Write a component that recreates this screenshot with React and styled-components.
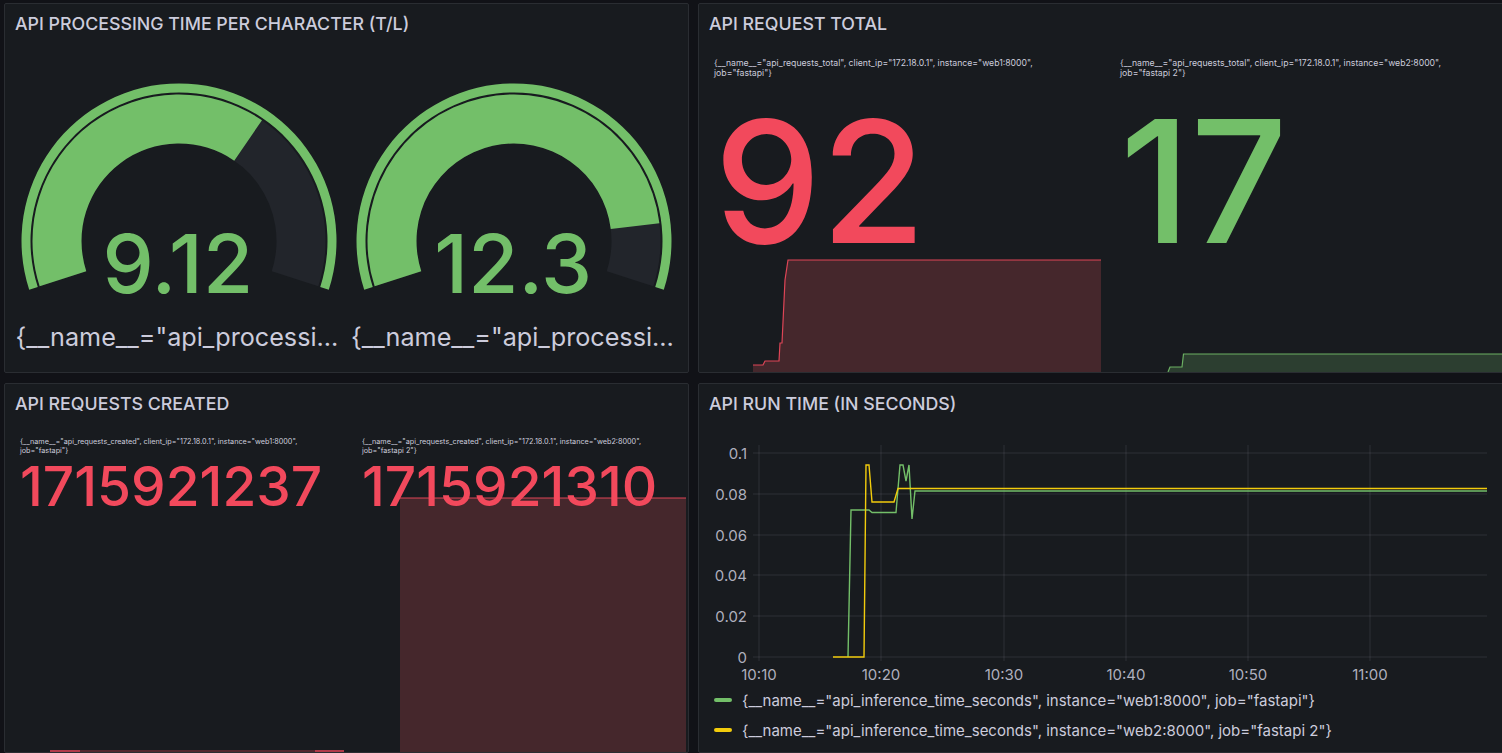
import styled, { createGlobalStyle } from 'styled-components';

const GREEN = '#73bf69';
const RED = '#f2495c';
const YELLOW = '#f2cc0c';

const GlobalStyle = createGlobalStyle`
  html, body {
    margin: 0;
    width: 1502px;
    height: 753px;
    overflow: hidden;
    background: #111217;
    font-family: Inter, "Liberation Sans", sans-serif;
  }
`;

const gauges = [
  { id: 'g1', value: '9.12', endAngle: 55.5 },
  { id: 'g2', value: '12.3', endAngle: 7 },
];

const statsTotal = [
  {
    id: 's1',
    label: '{__name__="api_requests_total", client_ip="172.18.0.1", instance="web1:8000", job="fastapi"}',
    value: '92',
    color: RED,
    fill: '#45272c',
    points: [[43, 365], [53, 365], [55, 361], [69, 361], [70, 343], [72, 343], [75, 280], [78, 260], [391, 260]],
  },
  {
    id: 's2',
    label: '{__name__="api_requests_total", client_ip="172.18.0.1", instance="web2:8000", job="fastapi 2"}',
    value: '17',
    color: GREEN,
    fill: '#2c3e30',
    points: [[52, 372], [54, 367], [66, 367], [67.5, 354], [391, 354]],
  },
];

const statsCreated = [
  {
    id: 'c1',
    label: '{__name__="api_requests_created", client_ip="172.18.0.1", instance="web1:8000", job="fastapi"}',
    value: '1715921237',
    points: [[34, 751], [328, 751]],
    flat: true,
  },
  {
    id: 'c2',
    label: '{__name__="api_requests_created", client_ip="172.18.0.1", instance="web2:8000", job="fastapi 2"}',
    value: '1715921310',
    points: [[42, 498], [328, 498]],
  },
];

const yTicks = [
  { label: '0.1', y: 453 },
  { label: '0.08', y: 494 },
  { label: '0.06', y: 535 },
  { label: '0.04', y: 575 },
  { label: '0.02', y: 616 },
  { label: '0', y: 657 },
];

const xTicks = [
  { label: '10:10', x: 759 },
  { label: '10:20', x: 881 },
  { label: '10:30', x: 1004 },
  { label: '10:40', x: 1126 },
  { label: '10:50', x: 1248 },
  { label: '11:00', x: 1370 },
];

const greenLine = '848,657 851,510 869,510 872,512.5 896,512.5 900,465 903,465 906,481 909,465 912,519 915,491 1487,491';
const yellowLine = '833,657 864,657 866,465 869,465 872,502 894,502 898,488.5 1487,488.5';

const legend = [
  { id: 'l1', color: GREEN, text: '{__name__="api_inference_time_seconds", instance="web1:8000", job="fastapi"}' },
  { id: 'l2', color: YELLOW, text: '{__name__="api_inference_time_seconds", instance="web2:8000", job="fastapi 2"}' },
];

// gauge arcs, angles in degrees counter-clockwise from +x
const polar = (r, deg) => {
  const a = (deg * Math.PI) / 180;
  return [168 + r * Math.cos(a), 161 - r * Math.sin(a)];
};

const arc = (r1, r2, from, to) => {
  const large = from - to > 180 ? 1 : 0;
  const [ax, ay] = polar(r1, from);
  const [bx, by] = polar(r1, to);
  const [cx, cy] = polar(r2, to);
  const [dx, dy] = polar(r2, from);
  return `M${ax} ${ay}A${r1} ${r1} 0 ${large} 1 ${bx} ${by}L${cx} ${cy}A${r2} ${r2} 0 ${large} 0 ${dx} ${dy}Z`;
};

const Gauge = ({ value, endAngle }) => (
  <GaugeCell>
    <GaugeDial>
      <svg width="336" height="215" viewBox="0 0 336 215">
        <path d={arc(157.5, 148.5, 198, -18)} fill={GREEN} />
        <path d={arc(146.5, 97.5, 198, -18)} fill="#22252b" />
        <path d={arc(146.5, 97.5, 198, endAngle)} fill={GREEN} />
      </svg>
      <GaugeValue>{value}</GaugeValue>
    </GaugeDial>
    <GaugeLabel>{'{__name__="api_processing_time_per_character", instance="web1:8000", job="fastapi"}'}</GaugeLabel>
  </GaugeCell>
);

const Spark = ({ points, color, fill, flat, top, width }) => {
  const line = points.map((p) => p.join(',')).join(' ');
  const first = points[0];
  const last = points[points.length - 1];
  return (
    <SparkLayer>
      <svg width={width} height="328" viewBox={`0 ${top} ${width} 328`}>
        {!flat && <polygon points={`${first[0]},800 ${line} ${last[0]},800`} fill={fill} />}
        {flat ? (
          <>
            <polyline points={line} fill="none" stroke={color} strokeOpacity="0.55" strokeWidth="1.2" />
            <line x1="34" x2="64" y1="751" y2="751" stroke={color} strokeWidth="1.2" />
            <line x1="299" x2="328" y1="751" y2="751" stroke={color} strokeWidth="1.2" />
          </>
        ) : (
          <polyline points={line} fill="none" stroke={color} strokeOpacity="0.9" strokeWidth="1.2" />
        )}
      </svg>
    </SparkLayer>
  );
};

const App = () => {
  return (
    <>
      <GlobalStyle />
      <Dashboard>
        <Panel>
          <PanelTitle>API PROCESSING TIME PER CHARACTER (T/L)</PanelTitle>
          <GaugeRow>
            {gauges.map((g) => (
              <Gauge key={g.id} value={g.value} endAngle={g.endAngle} />
            ))}
          </GaugeRow>
        </Panel>

        <Panel>
          <PanelTitle>API REQUEST TOTAL</PanelTitle>
          <StatRow $large>
            {statsTotal.map((s) => (
              <StatCell key={s.id} $large>
                <Spark points={s.points} color={s.color} fill={s.fill} width={391} top={44} />
                <StatLabel $large>{s.label}</StatLabel>
                <StatValue $large $color={s.color}>{s.value}</StatValue>
              </StatCell>
            ))}
          </StatRow>
        </Panel>

        <Panel>
          <PanelTitle>API REQUESTS CREATED</PanelTitle>
          <StatRow>
            {statsCreated.map((s) => (
              <StatCell key={s.id}>
                <Spark points={s.points} color={RED} fill="#45272c" flat={s.flat} width={328} top={424} />
                <StatLabel>{s.label}</StatLabel>
                <StatValue $color={RED}>{s.value}</StatValue>
              </StatCell>
            ))}
          </StatRow>
        </Panel>

        <Panel>
          <PanelTitle>API RUN TIME (IN SECONDS)</PanelTitle>
          <ChartWrap>
            <svg width="803" height="261" viewBox="699 424 803 261">
              {yTicks.map((t) => (
                <g key={t.label}>
                  <line x1="753" x2="1487" y1={t.y} y2={t.y} stroke="#ccccdc" strokeOpacity="0.12" />
                  <AxisText x="747" y={t.y + 6} textAnchor="end">{t.label}</AxisText>
                </g>
              ))}
              {xTicks.map((t) => (
                <g key={t.label}>
                  <line x1={t.x} x2={t.x} y1="445" y2="661" stroke="#ccccdc" strokeOpacity="0.12" />
                  <AxisText x={t.x} y="680" textAnchor="middle">{t.label}</AxisText>
                </g>
              ))}
              <polyline points={greenLine} fill="none" stroke={GREEN} strokeWidth="1.4" />
              <polyline points={yellowLine} fill="none" stroke={YELLOW} strokeWidth="1.4" />
            </svg>
          </ChartWrap>
          <Legend>
            {legend.map((l) => (
              <LegendRow key={l.id}>
                <LegendSwatch $color={l.color} />
                <span>{l.text}</span>
              </LegendRow>
            ))}
          </Legend>
        </Panel>
      </Dashboard>
    </>
  );
};

const Dashboard = styled.div`
  display: grid;
  grid-template-columns: 685px 820px;
  grid-template-rows: 370px 370px;
  column-gap: 9px;
  row-gap: 10px;
  padding: 3px 0 0 4px;
  width: 1520px;
`;

const Panel = styled.section`
  display: flex;
  flex-direction: column;
  box-sizing: border-box;
  background: #181b1f;
  border: 1px solid #2a2d32;
  border-radius: 2px;
  min-width: 0;
  overflow: hidden;
`;

const PanelTitle = styled.h2`
  flex: none;
  margin: 0;
  height: 40px;
  padding: 0 10px;
  font-size: 17.8px;
  font-weight: 500;
  line-height: 40px;
  color: #ccccdc;
`;

const GaugeRow = styled.div`
  display: flex;
  padding: 36px 0 0 6px;
`;

const GaugeCell = styled.div`
  width: 335.5px;
  flex: none;
  display: flex;
  flex-direction: column;
`;

const GaugeDial = styled.div`
  position: relative;
  height: 215px;
  svg {
    display: block;
    margin-left: -0.5px;
  }
`;

const GaugeValue = styled.div`
  position: absolute;
  left: -2px;
  right: 0;
  top: 139px;
  text-align: center;
  font-size: 81.5px;
  font-weight: 500;
  line-height: 90px;
  color: ${GREEN};
`;

const GaugeLabel = styled.div`
  margin: 26px 3px 0 4.5px;
  font-size: 25.2px;
  line-height: 32px;
  color: #ccccdc;
  white-space: nowrap;
  overflow: hidden;
  text-overflow: ellipsis;
`;

const StatRow = styled.div`
  flex: 1;
  display: flex;
  gap: ${(p) => (p.$large ? '15px' : '14px')};
  padding-left: 11px;
  min-height: 0;
`;

const StatCell = styled.div`
  position: relative;
  flex: none;
  width: ${(p) => (p.$large ? '391px' : '328px')};
  height: 100%;
`;

const SparkLayer = styled.div`
  position: absolute;
  left: 0;
  bottom: 0;
  svg {
    display: block;
  }
`;

const StatLabel = styled.div`
  position: relative;
  padding: ${(p) => (p.$large ? '14px 40px 0 4px' : '13px 26px 0 4px')};
  font-size: ${(p) => (p.$large ? '8.7px' : '7.25px')};
  line-height: ${(p) => (p.$large ? '10px' : '9px')};
  color: #ccccdc;
`;

const StatValue = styled.div`
  position: relative;
  margin-top: ${(p) => (p.$large ? '18px' : '1px')};
  padding-left: 4px;
  font-size: ${(p) => (p.$large ? '170px' : '55px')};
  font-weight: 500;
  line-height: ${(p) => (p.$large ? '170px' : '60px')};
  color: ${(p) => p.$color};
  white-space: nowrap;
`;

const ChartWrap = styled.div`
  flex: none;
  svg {
    display: block;
  }
`;

const AxisText = styled.text`
  font-size: 15px;
  fill: #ccccdc;
  fill-opacity: 0.85;
`;

const Legend = styled.div`
  display: flex;
  flex-direction: column;
  padding-left: 15px;
`;

const LegendRow = styled.div`
  display: flex;
  align-items: center;
  gap: 10px;
  height: 30px;
  font-size: 15px;
  color: #ccccdc;
  white-space: nowrap;
`;

const LegendSwatch = styled.i`
  display: block;
  width: 18px;
  height: 4px;
  border-radius: 2px;
  background: ${(p) => p.$color};
`;

export default App;
